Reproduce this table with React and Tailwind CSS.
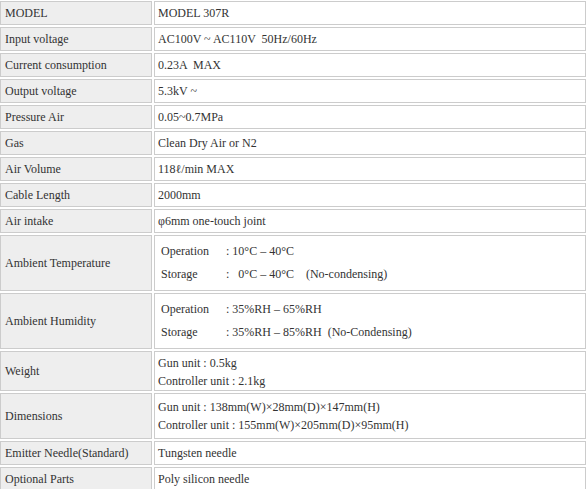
import React from 'react';

const simple = [
  ['MODEL', 'MODEL 307R'],
  ['Input voltage', 'AC100V ~ AC110V  50Hz/60Hz'],
  ['Current consumption', '0.23A  MAX'],
  ['Output voltage', '5.3kV ~'],
  ['Pressure Air', '0.05~0.7MPa'],
  ['Gas', 'Clean Dry Air or N2'],
  ['Air Volume', '118ℓ/min MAX'],
  ['Cable Length', '2000mm'],
  ['Air intake', 'φ6mm one-touch joint'],
];

function Label({ children, h }) {
  return (
    <div className={`${h} flex items-center pl-[4px] bg-[#eeeeee] border border-[#cccccc]`}>
      {children}
    </div>
  );
}

function Value({ children, h, className = '' }) {
  return (
    <div className={`${h} flex flex-col justify-center pl-[3px] bg-white border border-[#cccccc] ${className}`}>
      {children}
    </div>
  );
}

function Env({ rows }) {
  return (
    <div className="flex flex-col gap-[5px] pl-[3px] pb-[2px]">
      {rows.map(([k, v]) => (
        <div key={k} className="flex h-[18px] items-center">
          <span className="w-[65px]">{k}</span>
          <span className="whitespace-pre">{v}</span>
        </div>
      ))}
    </div>
  );
}

export default function App() {
  return (
    <div
      className="w-[587px] h-[489px] overflow-hidden bg-white text-[12px] text-[#333333]"
      style={{ fontFamily: '"Liberation Serif", "Times New Roman", serif' }}
    >
      <div className="grid grid-cols-[152px_432px] gap-[2px] pt-[1px]">
        {simple.map(([k, v]) => (
          <React.Fragment key={k}>
            <Label h="h-[24px]">{k}</Label>
            <Value h="h-[24px]">
              <span className="whitespace-pre">{v}</span>
            </Value>
          </React.Fragment>
        ))}

        <Label h="h-[56px]">Ambient Temperature</Label>
        <Value h="h-[56px]">
          <Env
            rows={[
              ['Operation', ': 10°C – 40°C'],
              ['Storage', ':   0°C – 40°C    (No-condensing)'],
            ]}
          />
        </Value>

        <Label h="h-[56px]">Ambient Humidity</Label>
        <Value h="h-[56px]">
          <Env
            rows={[
              ['Operation', ': 35%RH – 65%RH'],
              ['Storage', ': 35%RH – 85%RH  (No-Condensing)'],
            ]}
          />
        </Value>

        <Label h="h-[40px]">Weight</Label>
        <Value h="h-[40px]">
          <div className="leading-[18px] pt-[2px]">Gun unit : 0.5kg</div>
          <div className="leading-[18px]">Controller unit : 2.1kg</div>
        </Value>

        <Label h="h-[46px]">Dimensions</Label>
        <Value h="h-[46px]">
          <div className="leading-[18px]">Gun unit : 138mm(W)×28mm(D)×147mm(H)</div>
          <div className="leading-[18px]">Controller unit : 155mm(W)×205mm(D)×95mm(H)</div>
        </Value>

        <Label h="h-[24px]">Emitter Needle(Standard)</Label>
        <Value h="h-[24px]">Tungsten needle</Value>

        <Label h="h-[24px]">Optional Parts</Label>
        <Value h="h-[24px]">Poly silicon needle</Value>
      </div>
    </div>
  );
}
